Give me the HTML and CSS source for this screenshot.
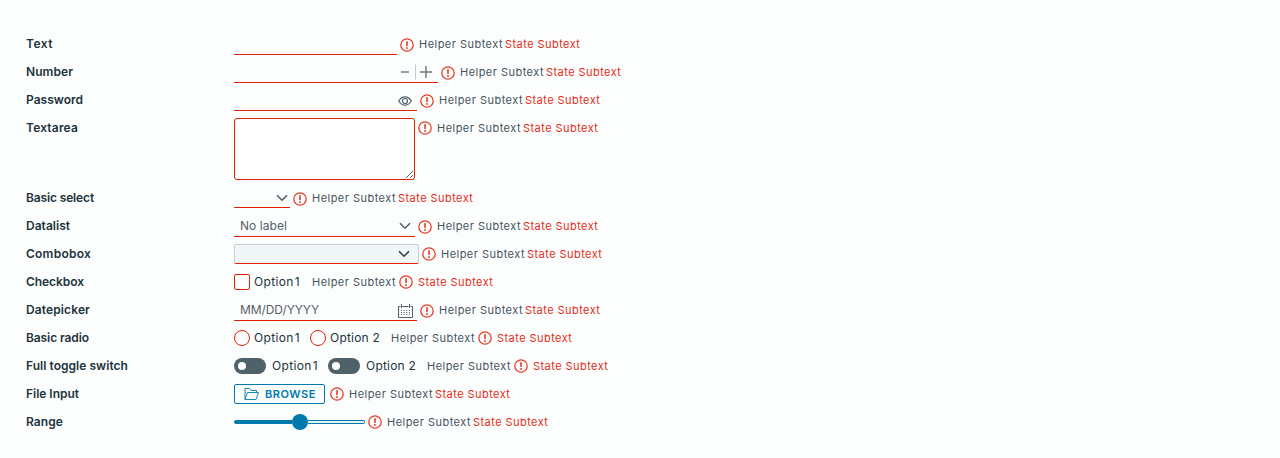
FILE: index.html
```html
<!DOCTYPE html>
<html lang="en">
<head>
<meta charset="utf-8">
<title>Form controls</title>
<link rel="stylesheet" href="styles.css">
<script src="form.js" defer></script>
</head>
<body>
<svg class="defs" aria-hidden="true">
<symbol id="alert" viewBox="0 0 14 14"><circle cx="7" cy="7" r="6.2" fill="none" stroke="currentColor" stroke-width="1.3"/><path d="M7 3.8v3.7" stroke="currentColor" stroke-width="1.6" stroke-linecap="round"/><circle cx="7" cy="10" r=".9" fill="currentColor"/></symbol>
<symbol id="chevron" viewBox="0 0 12 8"><path d="M1 1.2l5 5 5-5" fill="none" stroke="currentColor" stroke-width="1.6"/></symbol>
</svg>
<main class="form">
<div class="row"><label style="--w:27px">Text</label><div class="line text"></div></div>
<div class="row"><label style="--w:47px">Number</label><div class="line number"><svg class="minus" viewBox="0 0 8 2"><path d="M0 1h8"/></svg><i class="divider"></i><svg class="plus" viewBox="0 0 12 12"><path d="M0 6h12M6 0v12"/></svg></div></div>
<div class="row"><label style="--w:57px">Password</label><div class="line password"><svg class="eye" viewBox="0 0 14 10"><path d="M.7 5Q3.2.8 7 .8T13.3 5Q10.800 9.200 7 9.200T.7 5Z"/><circle cx="7" cy="5" r="2.500"/></svg></div></div>
<div class="row tall"><label style="--w:52px">Textarea</label><textarea></textarea></div>
<div class="row"><label style="--w:68px">Basic select</label><div class="line select"><svg class="chevron"><use href="#chevron"/></svg></div></div>
<div class="row"><label style="--w:44px">Datalist</label><div class="line datalist"><span class="fit" style="--w:47px">No label</span><svg class="chevron"><use href="#chevron"/></svg></div></div>
<div class="row"><label style="--w:65px">Combobox</label><div class="combo"><svg class="chevron"><use href="#chevron"/></svg></div></div>
<div class="row choice"><label style="--w:58px">Checkbox</label><i class="check"></i><span class="option tight fit" style="--w:46px">Option 1</span></div>
<div class="row"><label style="--w:64px">Datepicker</label><div class="line date"><span class="fit" style="--w:79px">MM/DD/YYYY</span><svg class="calendar" viewBox="0 0 15 14"><path d="M2.500 2.500H.5v11h14v-11h-2M4.500 2.500h6M3.500 0v4M11.500 0v4"/><path class="days" d="M3 6.500h9M3 8.500h9M3 10.500h9"/></svg></div></div>
<div class="row choice"><label style="--w:63px">Basic radio</label><i class="radio"></i><span class="option tight fit" style="--w:46px">Option 1</span><i class="radio next"></i><span class="option fit" style="--w:50px">Option 2</span></div>
<div class="row choice"><label style="--w:102px">Full toggle switch</label><i class="toggle"></i><span class="option tight fit" style="--w:46px">Option 1</span><i class="toggle next"></i><span class="option fit" style="--w:50px">Option 2</span></div>
<div class="row"><label style="--w:53px">File Input</label><button class="browse"><svg viewBox="0 0 15 12"><path d="M1 11.500V.5h4.500l1.500 2h5.500v2M1 11.500l2.500-7h11l-2.500 7Z"/></svg><span class="fit" style="--w:51px">BROWSE</span></button></div>
<div class="row"><label style="--w:37px">Range</label><div class="range"><i class="fill"></i><i class="knob"></i><i class="track"></i></div></div>
</main>
</body>
</html>
```
FILE: styles.css
```css
* { box-sizing: border-box; }
body { margin: 0; height: 458px; overflow: hidden; background: #fcfefe; font: 12px/20px Inter, "Open Sans", sans-serif; color: #21333b; }
.defs { display: none; }
.form { padding: 34px 26px; display: flex; flex-direction: column; gap: 8px; }
.row { display: flex; height: 20px; align-items: flex-start; }
.row.tall { height: 62px; }
label { flex: 0 0 208px; font-weight: 600; font-size: 12px; white-space: nowrap; color: #21333b; }
.fit { display: inline-block; flex: none; white-space: nowrap; }
.line { flex: none; height: 21px; border-bottom: 1px solid #e02200; display: flex; align-items: center; color: #565f66; }
.text { width: 163px; }
.number { width: 204px; padding-left: 167px; }
.password { width: 183px; padding: 2px 0 0 164px; }
.select { width: 56px; height: 20px; padding: 1px 2px 0; justify-content: flex-end; }
.datalist { width: 181px; padding: 0 4px 0 6px; justify-content: space-between; }
.date { width: 183px; padding: 0 4px 0 6px; justify-content: space-between; }
.date .calendar { margin-top: 1px; }
.minus { width: 8px; height: 2px; }
.minus path, .plus path { stroke: #6b7680; stroke-width: 1.4; }
.divider { width: 1px; height: 16px; margin: 0 4px 0 6px; background: #c4ced4; }
.plus { width: 12px; height: 12px; }
.eye { width: 14px; height: 10px; fill: none; stroke: #4f6169; stroke-width: 1.2; }
.chevron { width: 12px; height: 8px; color: #4f6169; }
.calendar { width: 15px; height: 14px; fill: none; stroke: #4f6169; stroke-width: 1; }
.calendar .days { stroke-dasharray: 1 1.660; }
textarea { width: 181px; height: 62px; margin: 0; border: 1px solid #e02200; border-radius: 3px; background: #fff; resize: both; }
.combo { width: 185px; height: 20px; padding: 0 8px; display: flex; align-items: center; justify-content: flex-end; background: #f1f6f8; border: 1px solid #c1cdd4; border-bottom-color: #e02200; border-radius: 2px; }
.combo .chevron { color: #2d4048; }
.choice { align-items: center; }
.option { margin-left: 4px; color: #21333b; }
.tight { word-spacing: -2.5px; }
.check { width: 16px; height: 16px; border: 1px solid #e02200; border-radius: 2px; background: #fff; }
.radio { width: 16px; height: 16px; border: 1px solid #e02200; border-radius: 50%; background: #fff; }
.radio.next { margin-left: 10px; }
.toggle { width: 32px; height: 16px; padding: 4px; border-radius: 8px; background: #4f6169; }
.toggle::before { content: ""; display: block; width: 8px; height: 8px; border-radius: 50%; background: #fff; }
.toggle + .option { margin-left: 6px; }
.toggle.next { margin-left: 10px; }
.browse { width: 91px; height: 20px; padding: 0 0 0 9px; display: flex; align-items: center; gap: 6px; background: transparent; border: 1px solid #0079ad; border-radius: 2px; color: #0079ad; font: 600 11px/18px Inter, "Open Sans", sans-serif; }
.browse svg { width: 15px; height: 12px; fill: none; stroke: #0079ad; stroke-width: .9; }
.range { width: 131px; height: 20px; display: flex; align-items: center; }
.fill { width: 58px; height: 4px; border-radius: 2px 0 0 2px; background: #0079ad; }
.knob { width: 16px; height: 16px; border-radius: 50%; background: #0079ad; }
.track { flex: 1; height: 4px; border: 1px solid #0079ad; border-left: 0; border-radius: 0 2px 2px 0; background: #e8f1f4; }
.status { flex: none; width: 14px; height: 14px; color: #e43c25; }
.subtext { font-size: 11px; flex: none; white-space: nowrap; color: #45535d; }
.error { color: #e32c18; }
```
FILE: form.js
```js
// Each entry: icon gap after the control, icon top offset, helper placed before the icon.
const rows = [[3, 4], [3, 4], [3, 4], [3, 3], [3, 4], [3, 4], [3, 3], [12, 3, true], [3, 4], [11, 3, true], [11, 3, true], [5, 3], [3, 3]];

function subtext(text, width, cls) {
  const el = document.createElement('span');
  el.className = 'subtext fit ' + cls;
  el.style.setProperty('--w', width + 'px');
  el.textContent = text;
  return el;
}

document.querySelectorAll('.row').forEach((row, i) => {
  const [gap, top, helperFirst] = rows[i];
  const helper = subtext('Helper Subtext', 84, 'helper');
  const error = subtext('State Subtext', 75.4, 'error');
  const icon = document.createElementNS('http://www.w3.org/2000/svg', 'svg');
  icon.setAttribute('class', 'status');
  icon.innerHTML = '<use href="#alert"/>';
  if (!helperFirst) icon.style.marginTop = top + 'px';
  if (helperFirst) {
    helper.style.marginLeft = gap + 'px';
    icon.style.marginLeft = '3px';
    error.style.marginLeft = '5px';
    row.append(helper, icon, error);
  } else {
    icon.style.marginLeft = gap + 'px';
    helper.style.marginLeft = '5px';
    error.style.marginLeft = '2px';
    row.append(icon, helper, error);
  }
});

document.querySelectorAll('.fit, label').forEach((el) => {
  const range = document.createRange();
  range.selectNodeContents(el);
  const target = parseFloat(el.style.getPropertyValue('--w'));
  const natural = range.getBoundingClientRect().width;
  el.style.letterSpacing = (target - natural) / el.textContent.length + 'px';
  if (el.classList.contains('fit')) el.style.width = target + 'px';
});
```
